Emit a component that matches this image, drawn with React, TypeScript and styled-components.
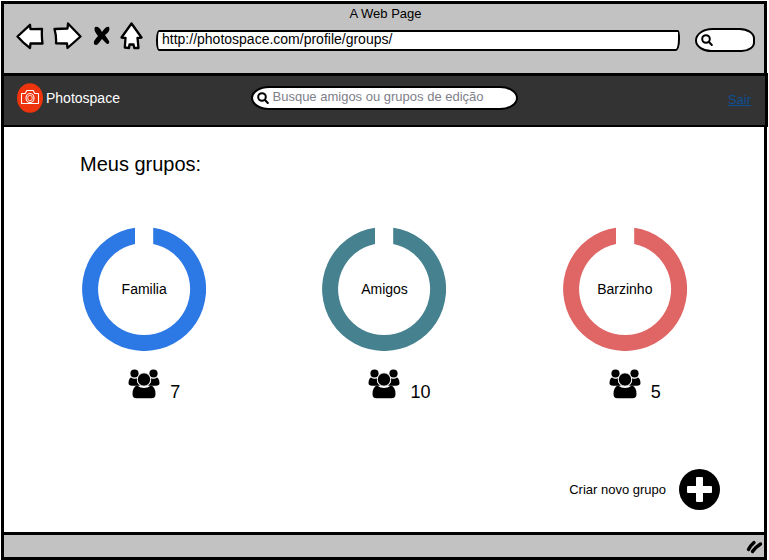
import React from "react";
import styled, { createGlobalStyle } from "styled-components";

const GlobalStyle = createGlobalStyle`
  *, *::before, *::after { box-sizing: border-box; }
  body {
    margin: 0;
    background: #fff;
    color: #000;
    font-family: "Liberation Sans", Arial, sans-serif;
    font-size: 13px;
    line-height: 16px;
  }
  button, input { font: inherit; color: inherit; }
`;

const BrowserWindow = styled.div`
  display: flex;
  flex-direction: column;
  min-height: 100vh;
  padding: 1px 1px 0 1px;
  background: #fff;
`;

const Chrome = styled.header`
  display: flex;
  flex-direction: column;
  height: 72px;
  margin-right: 1px;
  padding: 2px 9px 0 12px;
  background: #c2c2c2;
  border: 3px solid #000;
  border-bottom: 0;
`;

const PageTitle = styled.div`
  text-align: center;
`;

const Toolbar = styled.div`
  display: flex;
  align-items: center;
  padding-top: 6px;
`;

const NavButtons = styled.div`
  display: flex;
  align-items: center;
  gap: 9px;
  margin: -8px 13px 0 0;
`;

const IconButton = styled.button`
  display: flex;
  padding: 0;
  border: 0;
  background: none;
  cursor: pointer;
`;

const AddressInput = styled.input`
  flex: 1;
  min-width: 0;
  height: 21px;
  padding: 0 4px 2px;
  background: #fff;
  border: 2px solid #000;
  border-radius: 3px 2px 4px 3px / 10px 8px 12px 10px;
  font-size: 14px;
  outline: none;
`;

const SearchField = styled.label<{ $wide?: boolean }>`
  display: flex;
  align-items: center;
  gap: 4px;
  flex: none;
  width: ${(p) => (p.$wide ? "267px" : "60px")};
  height: 24px;
  margin-left: ${(p) => (p.$wide ? "0" : "15px")};
  padding: 0 4px;
  background: #fff;
  border: 2px solid #000;
  border-radius: ${(p) => (p.$wide ? "18px / 12px" : "18px 16px 14px 17px / 13px 11px 10px 12px")};
  svg { flex: none; }
`;

const SearchInput = styled.input`
  width: 100%;
  min-width: 0;
  padding: 0 0 2px;
  border: 0;
  outline: none;
  background: none;
  &::placeholder { color: #80808a; opacity: 1; }
`;

const SiteHeader = styled.div`
  display: grid;
  grid-template-columns: 1fr auto 1fr;
  align-items: center;
  height: 54px;
  padding: 0 14px 5px 13px;
  background: #333;
  border: 3px solid #000;
  border-bottom-width: 2px;
`;

const Brand = styled.a`
  display: flex;
  align-items: center;
  gap: 3px;
  color: #fff;
  text-decoration: none;
  font-size: 14px;
`;

const LogoutLink = styled.a`
  justify-self: end;
  padding-top: 4px;
  color: #0d4f94;
`;

const Main = styled.main`
  flex: 1;
  display: flex;
  flex-direction: column;
  margin-right: 1px;
  padding: 25px 19px 22px 20px;
  border: solid #000;
  border-width: 0 3px;
`;

const Heading = styled.h1`
  margin: 0 0 51px 56px;
  font-size: 20px;
  font-weight: 400;
  line-height: 24px;
`;

const GroupList = styled.ul`
  display: grid;
  grid-template-columns: repeat(3, 1fr);
  margin: 0;
  padding: 0;
  list-style: none;
`;

const Group = styled.li`
  display: flex;
  flex-direction: column;
  align-items: center;
  gap: 18px;
`;

const Ring = styled.a`
  display: grid;
  place-items: center;
  color: inherit;
  text-decoration: none;
  font-size: 14px;
  > * { grid-area: 1 / 1; }
`;

const Members = styled.div`
  display: grid;
  grid-template-columns: 1fr auto 1fr;
  gap: 10px;
  width: 100%;
  svg { grid-column: 2; }
`;

const Count = styled.span`
  align-self: end;
  font-size: 18px;
  line-height: 14px;
`;

const CreateButton = styled.button`
  display: flex;
  align-items: center;
  gap: 13px;
  margin: auto 25px 0 auto;
  padding: 0;
  border: 0;
  background: none;
  cursor: pointer;
`;

const StatusBar = styled.footer`
  display: flex;
  justify-content: flex-end;
  align-items: center;
  height: 28px;
  margin-right: 1px;
  padding: 2px 1px 0 0;
  background: #c2c2c2;
  border: 3px solid #000;
`;

const ArrowLeft = () => (
  <svg width="28" height="27" viewBox="0 0 28 27" fill="#fff" stroke="#000" strokeWidth="2.3" strokeLinejoin="round">
    <path d="M1.5 13.5 14 1.8 14.5 6.2 26 5.8Q25.5 13 26.5 20.5L14.5 20.3 14 25Q7 20 1.5 13.5Z" />
  </svg>
);

const ArrowRight = () => (
  <svg width="29" height="28" viewBox="0 0 29 28" fill="#fff" stroke="#000" strokeWidth="2.3" strokeLinejoin="round">
    <path d="M1.5 7 14.5 6.5 15 1.5 27.5 14.5 14.5 26 14 21.5 3 21.3Q3.5 14 1.5 7Z" />
  </svg>
);

const Stop = () => (
  <svg width="20" height="20" viewBox="-2 0 20 20">
    <path d="M2 1Q0 4 5 10 0 15 1 18 3 20 5 18L9 13 14 18Q17 18 16 15L12 9Q18 5 16 1 13 0 9 6 6 0 2 1Z" />
  </svg>
);

const Home = () => (
  <svg width="23" height="28" viewBox="0 0 23 28" fill="#fff" stroke="#000" strokeWidth="2.3" strokeLinejoin="round">
    <path d="M11.5 1.5 21.5 15.5 17.5 16 18.5 26 14.3 26 13.5 22.5 9.5 22.5 9 26 4.8 25.5 5.5 16 1.5 15.5Z" />
  </svg>
);

const Magnifier = () => (
  <svg width="12" height="12" viewBox="0 0 12 12" fill="none" stroke="#000" strokeWidth="2" strokeLinecap="round">
    <circle cx="5" cy="5" r="3.8" />
    <path d="m8 8 2.8 3" />
  </svg>
);

const CameraLogo = () => (
  <svg width="26" height="30" viewBox="0 0 26 30" fill="none" stroke="#fff" strokeWidth="1.1">
    <ellipse cx="13" cy="15" rx="13" ry="14.7" fill="#ee340c" stroke="none" />
    <path d="M5 10.5H8.3L9.8 7.5H16.2L17.7 10.5H21Q21.5 10.5 21.5 11.2V20.5H4.5V11.2Q4.5 10.5 5 10.5Z" />
    <ellipse cx="13" cy="15" rx="4" ry="4.5" />
    <ellipse cx="13" cy="15" rx="2.3" ry="2.8" strokeWidth="0.8" />
  </svg>
);

const RingShape = ({ color }: { color: string }) => (
  <svg width="124" height="124" viewBox="0 0 124 124" fill={color} aria-hidden="true">
    <path d="M53 .7A62 62 0 1 0 71.200 .7V17A46 46 0 1 1 53 17Z" />
  </svg>
);

const People = () => (
  <svg width="32" height="30" viewBox="0 0 32 30" aria-hidden="true">
    <circle cx="6.500" cy="4.500" r="4.100" />
    <circle cx="25.500" cy="4.500" r="4.100" />
    <path d="M3.200 8.500Q5.500 10.500 9 9.200 8.500 14 12 16.800H4Q.5 16.800.5 14 .8 9 3.200 8.500Z" />
    <path d="M28.800 8.500Q26.500 10.500 23 9.200 23.500 14 20 16.800H28Q31.500 16.800 31.500 14 31.200 9 28.800 8.500Z" />
    <circle cx="16" cy="10.500" r="6.700" stroke="#fff" />
    <path d="M9 16.500Q16 21.500 23 16.500 27.500 18 27.500 25 27.500 29.300 23.500 29.300H8.500Q4.500 29.300 4.500 25 4.500 18 9 16.500Z" />
  </svg>
);

const Plus = () => (
  <svg width="41" height="41" viewBox="0 0 41 41" aria-hidden="true">
    <circle cx="20.500" cy="20.500" r="20.500" />
    <path
      fill="#fff"
      d="M18 8H23Q24 8 24 9V17H32Q33 17 33 18V23Q33 24 32 24H24V32Q24 33 23 33H18Q17 33 17 32V24H9Q8 24 8 23V18Q8 17 9 17H17V9Q17 8 18 8Z"
    />
  </svg>
);

const ResizeGrip = () => (
  <svg width="17" height="14" viewBox="0 0 17 14" fill="none" stroke="#000" strokeWidth="3.400" strokeLinecap="round">
    <path d="M2.500 9.500Q4 6 8 2.500M6.500 11.500Q9 7.500 14.500 4" />
  </svg>
);

const groups = [
  { name: "Familia", members: 7, color: "#2c78e4" },
  { name: "Amigos", members: 10, color: "#45818e" },
  { name: "Barzinho", members: 5, color: "#e06666" },
];

export default function App() {
  return (
    <BrowserWindow>
      <GlobalStyle />
      <Chrome>
        <PageTitle>A Web Page</PageTitle>
        <Toolbar>
          <NavButtons>
            <IconButton aria-label="Voltar"><ArrowLeft /></IconButton>
            <IconButton aria-label="Avançar"><ArrowRight /></IconButton>
            <IconButton aria-label="Parar"><Stop /></IconButton>
            <IconButton aria-label="Início"><Home /></IconButton>
          </NavButtons>
          <AddressInput aria-label="Endereço" defaultValue="http://photospace.com/profile/groups/" />
          <SearchField>
            <Magnifier />
            <SearchInput aria-label="Pesquisar na web" />
          </SearchField>
        </Toolbar>
      </Chrome>
      <SiteHeader>
        <Brand href="#"><CameraLogo />Photospace</Brand>
        <SearchField $wide>
          <Magnifier />
          <SearchInput aria-label="Buscar" placeholder="Busque amigos ou grupos de edição" />
        </SearchField>
        <LogoutLink href="#">Sair</LogoutLink>
      </SiteHeader>
      <Main>
        <Heading>Meus grupos:</Heading>
        <GroupList>
          {groups.map((g) => (
            <Group key={g.name}>
              <Ring href="#">
                <RingShape color={g.color} />
                <span>{g.name}</span>
              </Ring>
              <Members>
                <People />
                <Count>{g.members}</Count>
              </Members>
            </Group>
          ))}
        </GroupList>
        <CreateButton>
          Criar novo grupo
          <Plus />
        </CreateButton>
      </Main>
      <StatusBar><ResizeGrip /></StatusBar>
    </BrowserWindow>
  );
}
